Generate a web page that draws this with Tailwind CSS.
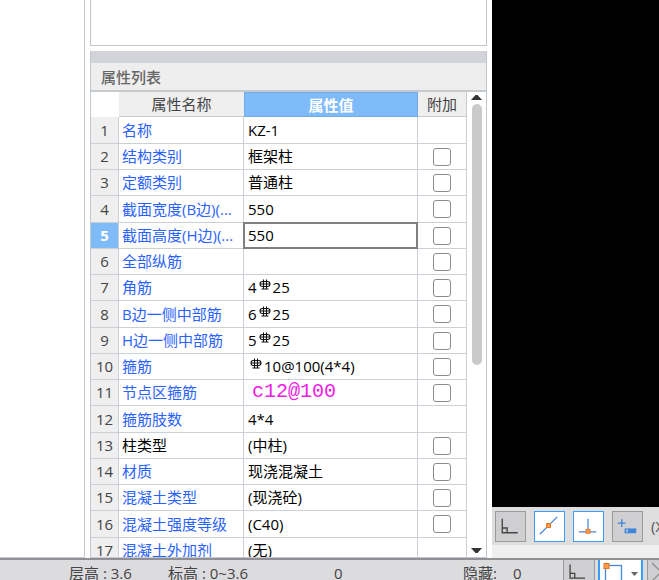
<!DOCTYPE html>
<html lang="zh-CN">
<head>
    <meta charset="UTF-8">
    <meta name="viewport" content="width=device-width, initial-scale=1.0">
    <title>属性列表</title>
    <script src="https://cdn.jsdelivr.net/npm/@tailwindcss/browser@4"></script>
</head>
<body class="h-screen overflow-hidden flex flex-col bg-white text-[15px] leading-5 text-black font-['Open_Sans','Noto_Sans_CJK_SC',sans-serif]">
    <!-- rebar grade symbol -->
    <svg class="hidden">
        <symbol id="rebar" viewBox="0 0 12 12">
            <path d="M4.500 0.500v10M7.500 0.500v10M2.500 10h7M3.500 2.500h5a2 2 0 0 1 0 5h-5a2 2 0 0 1 0-5zM1 5h10" fill="none" stroke="#111" stroke-width="1.100"/>
        </symbol>
        <symbol id="ortho" viewBox="0 0 30 30">
            <path d="M6.500 7v14.500h16M6.500 16.500h5v5" fill="none" stroke="#444" stroke-width="1.400"/>
        </symbol>
    </svg>

    <main class="flex-1 min-h-0 flex">
        <div class="w-[85px] shrink-0 border-r border-b border-[#c5cad0]"></div>

        <section class="w-[397px] ml-[5px] mr-[5px] shrink-0 flex flex-col">
            <div class="h-[46px] shrink-0 border border-t-0 border-[#c3c6ca]"></div>
            <div class="mt-[5px] flex-1 min-h-0 flex flex-col border border-t-0 border-[#c3c8cf]">
                <div class="h-3 shrink-0 bg-[#d3d4da]"></div>
                <h2 class="h-[29px] shrink-0 px-[10px] flex items-center bg-[#eee] border-b-2 border-[#c5cacf] text-[#666] font-medium">属性列表</h2>
                <div class="flex-1 min-h-0 flex">
                    <div class="flex-1 min-w-0 overflow-hidden">
                        <table class="w-full table-fixed border-separate border-spacing-0 text-left [&_th]:font-normal [&_th]:p-0 [&_td]:p-0 [&_td]:whitespace-nowrap [&_td]:border-r [&_td]:border-b [&_td]:border-[#cbd0d6]">
                            <colgroup>
                                <col class="w-7">
                                <col class="w-[125px]">
                                <col>
                                <col class="w-[49px]">
                            </colgroup>
                            <thead>
                                <tr class="h-[25px] text-center text-[#444]">
                                    <th></th>
                                    <th class="bg-[#efefef] border-b border-[#ccc]" scope="col">属性名称</th>
                                    <th class="bg-[#80bbf9] border border-[#70abe9] text-white" scope="col"><b>属性值</b></th>
                                    <th class="bg-[#efefef] border-r border-b border-[#ccc]" scope="col">附加</th>
                                </tr>
                            </thead>
                            <tbody id="rows" class="[&>tr]:h-[26px] [&>tr:nth-child(4n)]:h-[27px] [&>tr:first-child]:h-[27px]"></tbody>
                        </table>
                    </div>
                    <div class="w-[19px] shrink-0 flex flex-col items-center pt-[3px] pb-1">
                        <svg class="w-[11px] h-[5px] shrink-0" viewBox="0 0 11 5"><path d="M0 5L4.500 0h2l4.500 5z" fill="#333"/></svg>
                        <div class="mt-1 w-[10px] h-[261px] rounded-full bg-[#cacaca]"></div>
                        <svg class="mt-auto w-[11px] h-[5px] shrink-0" viewBox="0 0 11 5"><path d="M0 0L4.500 5h2l4.500-5z" fill="#333"/></svg>
                    </div>
                </div>
            </div>
        </section>

        <section class="flex-1 min-w-0 flex flex-col">
            <div class="flex-1 bg-black"></div>
            <div class="h-[38px] shrink-0 pl-[3px] flex items-center gap-2 overflow-hidden bg-[#dededf] whitespace-nowrap text-[#555]">
                <button class="size-[31px] shrink-0 bg-[#cfcfd1] border border-[#9b9b9d]" aria-label="正交">
                    <svg class="size-full" viewBox="0 0 30 30"><use href="#ortho"/></svg>
                </button>
                <button class="size-[31px] shrink-0 bg-white border border-[#3c9cfa]" aria-label="中点">
                    <svg class="size-full" viewBox="0 0 30 30">
                        <path d="M5 23L23 5" stroke="#4a86d8" stroke-width="1.300"/>
                        <rect x="12" y="12" width="4" height="4" fill="#ff9a4a" stroke="#e57420"/>
                    </svg>
                </button>
                <button class="size-[31px] shrink-0 bg-white border border-[#3c9cfa]" aria-label="垂点">
                    <svg class="size-full" viewBox="0 0 30 30">
                        <path d="M5 20.500h18M14.500 7v13" stroke="#4a86d8" stroke-width="1.300"/>
                        <rect x="12.500" y="18" width="4" height="4" fill="#ff9a4a" stroke="#e57420"/>
                    </svg>
                </button>
                <button class="size-[31px] shrink-0 bg-[#cfcfd1] border border-[#9b9b9d]" aria-label="动态输入">
                    <svg class="size-full" viewBox="0 0 30 30">
                        <path d="M5 11.500h8M9 7.500v8" stroke="#3f86d8" stroke-width="1.400"/>
                        <rect x="12" y="17" width="12" height="5" fill="#3f86d8"/>
                        <path d="M14.500 18v3" stroke="#fff"/>
                    </svg>
                </button>
                <span>(X</span>
            </div>
            <div class="h-[13px] shrink-0 bg-[#efefef]"></div>
        </section>
    </main>

    <footer class="h-[22px] shrink-0 overflow-hidden flex items-start bg-[#dcdcde] border-t-2 border-[#8f8f94] text-[#444] whitespace-nowrap">
        <div class="flex-1 min-w-0 flex pt-[3px] pl-[69px]">
            <span class="w-[99px] shrink-0">层高 : 3.6</span>
            <span class="w-[166px] shrink-0">标高 : 0~3.6</span>
            <span class="w-[129px] shrink-0">0</span>
            <span class="w-[50px] shrink-0">隐藏:</span>
            <span>0</span>
        </div>
        <button class="w-8 h-7 shrink-0 bg-[#cfcfd1] border-x border-[#9b9b9d]" aria-label="正交">
            <svg class="w-[30px] h-7" viewBox="1 2 30 28"><use href="#ortho"/></svg>
        </button>
        <button class="ml-[3px] w-[45px] h-7 shrink-0 bg-white border-x-2 border-[#3c9cfa]" aria-label="矩形">
            <svg class="w-[41px] h-7" viewBox="0 0 41 28">
                <rect x="5.500" y="5.500" width="16" height="18" fill="none" stroke="#4a86d8" stroke-width="1.300"/>
                <rect x="4" y="3.500" width="5" height="5" fill="#ff9a4a" stroke="#e57420"/>
                <path d="M31 12h7l-3.500 4z" fill="#666"/>
            </svg>
        </button>
        <button class="ml-1 w-3 h-7 shrink-0 overflow-hidden bg-[#cfcfd1] border-l border-[#9b9b9d]" aria-label="交点">
            <svg class="w-7 h-7" viewBox="0 0 28 28"><path d="M4 3l18 18M22 3L4 21" stroke="#888" stroke-width="1.200"/></svg>
        </button>
    </footer>

    <script>
        // name, value, has the extra check box
        const properties = [
            ["名称", "KZ-1", false],
            ["结构类别", "框架柱", true],
            ["定额类别", "普通柱", true],
            ["截面宽度(B边)(...", "550", true],
            ["截面高度(H边)(...", "550", true],
            ["全部纵筋", "", true],
            ["角筋", "4#25", true],
            ["B边一侧中部筋", "6#25", true],
            ["H边一侧中部筋", "5#25", true],
            ["箍筋", "#10@100(4*4)", true],
            ["节点区箍筋", "c12@100", true],
            ["箍筋肢数", "4*4", false],
            ["柱类型", "(中柱)", true],
            ["材质", "现浇混凝土", true],
            ["混凝土类型", "(现浇砼)", true],
            ["混凝土强度等级", "(C40)", true],
            ["混凝土外加剂", "(无)", false]
        ];
        const selected = 5;
        const rebar = '<svg class="inline-block size-3 mx-[2px] mb-[2px] align-baseline"><use href="#rebar"/></svg>';

        function valueClass(number) {
            if (number === selected) return "outline-2 -outline-offset-1 outline-[#808080]";
            if (number === 11) return "text-xl leading-5 text-[#f01ae6] font-['Liberation_Mono',monospace]";
            return "";
        }

        document.getElementById("rows").innerHTML = properties.map(([name, value, extra], i) => {
            const number = i + 1;
            const numberClass = number === selected ? "bg-[#80bbf9] text-white font-bold" : "bg-[#efefef] text-[#444]";
            const nameClass = number === 13 ? "text-black" : "text-[#2962ff]";
            const indent = number === 11 ? "pl-2" : "pl-1";
            const check = extra ? `<input type="checkbox" aria-label="附加 ${name}" class="block mx-auto appearance-none size-[18px] rounded-[3px] border border-[#8c8c8c] bg-white">` : "";
            return `<tr>
                <td class="text-center ${numberClass}"><div class="h-[21px]">${number}</div></td>
                <td class="${nameClass}"><div class="pl-[3px] h-[21px]">${name}</div></td>
                <td><div class="h-[25px] pb-px flex items-center ${indent} ${valueClass(number)}"><span>${value.replace("#", rebar)}</span></div></td>
                <td>${check}</td>
            </tr>`;
        }).join("");
    </script>
</body>
</html>
